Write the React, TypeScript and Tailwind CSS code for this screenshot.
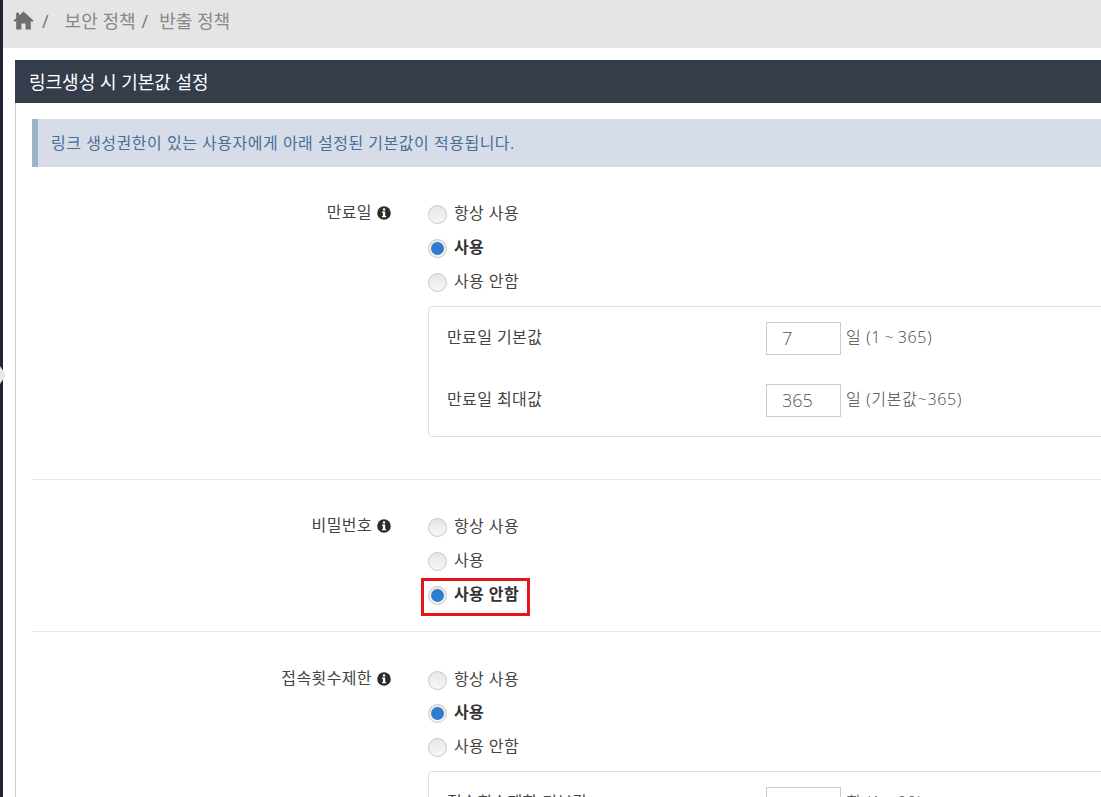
const FONT = "font-['Open_Sans','Noto_Sans_CJK_KR',sans-serif]";

function InfoIcon() {
  return (
    <svg width="14" height="14" viewBox="0 0 14 14" className="shrink-0">
      <circle cx="7" cy="7" r="6.8" fill="#2b2b2b" />
      <rect x="5.9" y="2.4" width="2.3" height="2.1" fill="#fff" />
      <path d="M5.1 5.6h3.1v4.3h.9v1.4H5v-1.4h.9V7H5.1z" fill="#fff" />
    </svg>
  );
}

function Radio({ label, on }: { label: string; on?: boolean }) {
  return (
    <div className="flex items-center h-[34px]">
      <span className="flex items-center justify-center w-[19px] h-[19px] rounded-full border border-[#c8c8c8] bg-gradient-to-b from-[#e6e6e6] to-[#f7f7f7] shrink-0">
        {on && <span className="block w-[13px] h-[13px] rounded-full bg-[#2f7bcf]" />}
      </span>
      <span className={`ml-[7px] -mt-[2px] text-[16px] tracking-[0.4px] ${on ? "font-bold text-[#333]" : "text-[#444]"}`}>{label}</span>
    </div>
  );
}

function Field({ label, value, hint, className }: { label: string; value: string; hint: string; className?: string }) {
  return (
    <div className={`flex items-center ${className ?? ""}`}>
      <span className="w-[319px] text-[16px] tracking-[0.4px] text-[#444] -mt-[4px]">{label}</span>
      <span className="flex items-center w-[75px] h-[33px] border border-[#ccc] pl-[15px] pb-[1px] text-[18px] font-light text-[#555]">{value}</span>
      <span className="ml-[5px] text-[16px] tracking-[0.7px] font-light text-[#444] -mt-[4px]">{hint}</span>
    </div>
  );
}

function Row({ label, children, className }: { label: string; children: React.ReactNode; className?: string }) {
  return (
    <div className={`flex ${className ?? ""}`}>
      <div className="w-[359px] flex items-center justify-end gap-[5px] h-[34px] text-[16px] tracking-[0.4px] text-[#444] shrink-0 -mt-[1px]">
        <span className="-mt-[2px]">{label}</span>
        <InfoIcon />
      </div>
      <div className="ml-[37px] flex-1 min-w-0">{children}</div>
    </div>
  );
}

export default function App() {
  return (
    <div className={`${FONT} w-[1101px] h-[797px] overflow-hidden bg-white flex relative`}>
      <div className="w-[3px] bg-[#1e2430] shrink-0" />
      <div className="absolute left-0 top-[366px] w-0 h-0 border-y-[9px] border-y-transparent border-l-[6px] border-l-[#e8e8e8]" />
      <div className="flex-1 min-w-0">
        <div className="h-[48px] bg-[#e5e5e5] flex items-center pl-[10px] pb-[6px] text-[18px] text-[#888]">
          <svg width="21" height="19" viewBox="0 0 21 19" className="-mt-[1px]">
            <path d="M10.5 0.5 L20.5 9.6 L19.2 11 L17.8 9.8 V18.5 H12.6 V12.4 H8.4 V18.5 H3.2 V9.8 L1.8 11 L0.5 9.6 L3.2 7.2 V1.8 H6 V4.6 Z" fill="#6f6f6f" />
          </svg>
          <span className="ml-[8px] text-[#777]">/</span>
          <span className="ml-[16px]">보안 정책</span>
          <span className="ml-[6px] text-[#777]">/</span>
          <span className="ml-[11px]">반출 정책</span>
        </div>
        <div className="ml-[12px] mt-[12px]">
          <div className="h-[43px] bg-[#353c4a] flex items-center pl-[14px] pt-[1px] text-[18px] text-white">링크생성 시 기본값 설정</div>
          <div className="border-l border-[#ccc] pl-[16px] pt-[16px]">
            <div className="h-[48px] border-l-[6px] border-[#9db3c9] bg-[#d6dde8] flex items-center pl-[13px] text-[16px] tracking-[0.51px] text-[#4a6d96]">
              링크 생성권한이 있는 사용자에게 아래 설정된 기본값이 적용됩니다.
            </div>
            <div className="pt-[30px] pb-[42px] border-b border-[#e6e6ea]">
              <Row label="만료일">
                <Radio label="항상 사용" />
                <Radio label="사용" on />
                <Radio label="사용 안함" />
                <div className="mt-[7px] h-[131px] rounded-tl-[5px] rounded-bl-[5px] border border-r-0 border-[#dfdfe5] pl-[18px] pt-[15px]">
                  <Field label="만료일 기본값" value="7" hint={"일 (1\u2009~\u2009365)"} />
                  <Field label="만료일 최대값" value="365" hint="일 (기본값~365)" className="mt-[29px]" />
                </div>
              </Row>
            </div>
            <div className="pt-[30px] pb-[19px] border-b border-[#e6e6ea]">
              <Row label="비밀번호">
                <Radio label="항상 사용" />
                <Radio label="사용" />
                <div className="relative">
                  <Radio label="사용 안함" on />
                  <div className="absolute -left-[7px] top-0 w-[109px] h-[38px] border-[3px] border-[#e8141c]" />
                </div>
              </Row>
            </div>
            <div className="pt-[31px]">
              <Row label="접속횟수제한">
                <Radio label="항상 사용" />
                <div className="-mt-[1px]"><Radio label="사용" on /></div>
                <Radio label="사용 안함" />
                <div className="mt-[7px] h-[131px] rounded-tl-[5px] rounded-bl-[5px] border border-r-0 border-[#dfdfe5] pl-[18px] pt-[15px]">
                  <Field label="접속횟수제한 기본값" value="10" hint={"회 (1\u2009~\u200999)"} />
                </div>
              </Row>
            </div>
          </div>
        </div>
      </div>
    </div>
  );
}
